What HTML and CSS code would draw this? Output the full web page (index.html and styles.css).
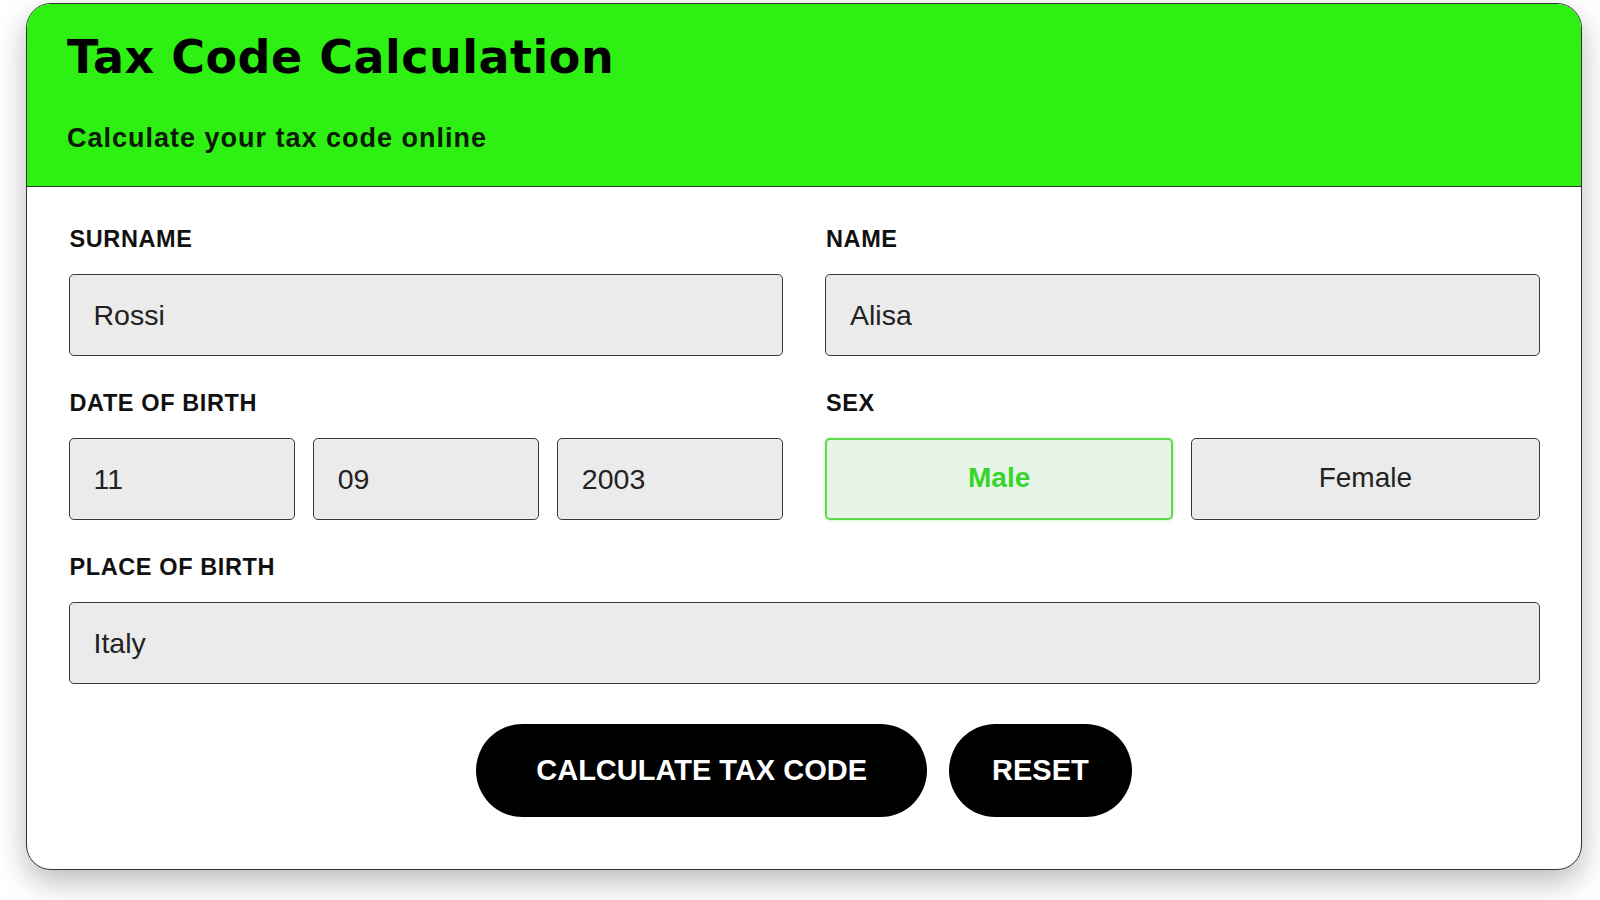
FILE: index.html
```html
<!DOCTYPE html>
<html lang="en">
<head>
<meta charset="utf-8">
<title>Tax Code Calculation</title>
<link rel="stylesheet" href="styles.css">
</head>
<body>
  <main class="card">
    <header class="card-header">
      <h1 class="title">Tax Code Calculation</h1>
      <p class="subtitle">Calculate your tax code online</p>
    </header>
    <form class="card-body">
      <div class="form-grid">
        <div class="field">
          <label class="label">SURNAME</label>
          <input class="input" type="text" value="Rossi">
        </div>
        <div class="field">
          <label class="label">NAME</label>
          <input class="input" type="text" value="Alisa">
        </div>
        <div class="field">
          <label class="label">DATE OF BIRTH</label>
          <div class="date-row">
            <input class="input" type="text" value="11">
            <input class="input" type="text" value="09">
            <input class="input" type="text" value="2003">
          </div>
        </div>
        <div class="field">
          <label class="label">SEX</label>
          <div class="sex-row">
            <button type="button" class="sex-btn active">Male</button>
            <button type="button" class="sex-btn">Female</button>
          </div>
        </div>
        <div class="field field-wide">
          <label class="label">PLACE OF BIRTH</label>
          <input class="input" type="text" value="Italy">
        </div>
      </div>
      <div class="actions">
        <button type="button" class="action-btn primary">CALCULATE TAX CODE</button>
        <button type="button" class="action-btn reset">RESET</button>
      </div>
    </form>
  </main>
</body>
</html>
```

FILE: styles.css
```css
* {
  box-sizing: border-box;
}

html, body {
  margin: 0;
  padding: 0;
  background: #ffffff;
}

body {
  font-family: "Liberation Sans", Arial, sans-serif;
  color: #111;
  padding: 3px 0 0 26px;
  height: 900px;
  overflow: hidden;
}

.card {
  width: 1556px;
  border: 1.5px solid #333;
  border-radius: 25px;
  overflow: hidden;
  background: #fff;
  box-shadow: 0 12px 30px rgba(0, 0, 0, 0.27);
}

.card-header {
  background: #2ef012;
  border-bottom: 1.5px solid #333;
  padding: 25px 40px 32px 40px;
}

.title {
  margin: 0;
  font-family: "DejaVu Sans", Inter, sans-serif;
  font-weight: 700;
  font-size: 46px;
  line-height: 56px;
  letter-spacing: 0.5px;
  color: #000;
}

.subtitle {
  margin: 37px 0 0 0;
  font-family: "Liberation Sans", Arial, sans-serif;
  font-weight: 700;
  font-size: 27px;
  line-height: 32px;
  letter-spacing: 1px;
  color: #0a1a05;
}

.card-body {
  padding: 37.5px 41.5px 52px 41.5px;
}

.form-grid {
  display: grid;
  grid-template-columns: 1fr 1fr;
  column-gap: 42px;
  row-gap: 32.5px;
}

.field {
  display: flex;
  flex-direction: column;
  gap: 21.5px;
}

.field-wide {
  grid-column: 1 / span 2;
}

.label {
  font-family: "Liberation Sans", Arial, sans-serif;
  font-weight: 700;
  font-size: 23.5px;
  line-height: 28px;
  letter-spacing: 0.6px;
  color: #111;
  padding-left: 1px;
}

.input {
  display: block;
  width: 100%;
  height: 82px;
  background: #ebebeb;
  border: 1.5px solid #3a3a3a;
  border-radius: 5px;
  padding: 0 24px;
  font-family: "Liberation Sans", Arial, sans-serif;
  font-size: 28.5px;
  color: #222;
  outline: none;
}

.date-row {
  display: grid;
  grid-template-columns: 1fr 1fr 1fr;
  gap: 18px;
}

.sex-row {
  display: grid;
  grid-template-columns: 1fr 1fr;
  gap: 18px;
}

.sex-btn {
  height: 82px;
  background: #ebebeb;
  border: 1.5px solid #3a3a3a;
  border-radius: 5px;
  font-family: "Liberation Sans", Arial, sans-serif;
  font-size: 28px;
  color: #222;
  padding: 0 0 3px 0;
  cursor: pointer;
}

.sex-btn.active {
  background: #e7f4e7;
  border: 2px solid #5fd94f;
  color: #35d52a;
  font-weight: 700;
  box-shadow: 0 0 3px rgba(60, 210, 40, 0.45);
}

.actions {
  display: flex;
  justify-content: center;
  gap: 22px;
  margin-top: 40px;
}

.action-btn {
  height: 93px;
  border: none;
  border-radius: 47px;
  background: #000;
  color: #fff;
  font-family: "Liberation Sans", Arial, sans-serif;
  font-weight: 700;
  font-size: 29px;
  cursor: pointer;
}

.action-btn.primary {
  padding: 0 60px;
}

.action-btn.reset {
  padding: 0 43px;
}
```
